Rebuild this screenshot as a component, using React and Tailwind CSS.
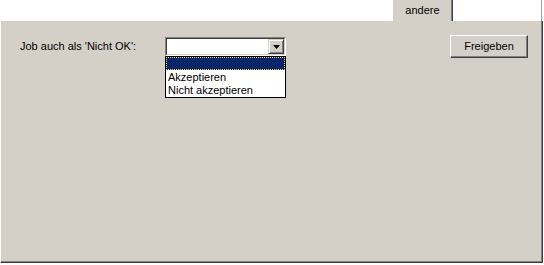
import React from "react";

export default function App() {
  return (
    <div className="w-[544px] h-[265px] bg-white relative overflow-hidden text-[11px] leading-[13px] text-black" style={{ fontFamily: '"Liberation Sans", Arial, sans-serif' }}>
      {/* top tab strip */}
      <div className="flex h-[21px]">
        <div className="w-[392px]" />
        <div className="w-[61px] bg-[#d4d0c8] border-l border-white border-r border-r-[#404040] shadow-[inset_-1px_0_0_#808080] flex items-start justify-center pt-[4px]">
          <span>andere</span>
        </div>
        <div className="w-[88px]" />
        <div className="w-[1px] bg-[#a0a0a0]" />
      </div>
      {/* panel */}
      <div className="w-[543px] h-[242px] bg-[#d4d0c8] border-l border-l-white border-r border-r-[#404040] border-b border-b-[#404040] shadow-[inset_-1px_-1px_0_#808080] pt-[14px] pl-[19px]">
        <div className="flex items-start">
          <div className="w-[145px] mt-[5px]">Job auch als 'Nicht OK':</div>
          <div className="relative mt-[2px]">
            <div className="w-[121px] h-[19px] border border-t-[#808080] border-l-[#808080] border-r-white border-b-white">
              <div className="w-full h-full bg-white border border-t-[#404040] border-l-[#404040] border-r-[#d4d0c8] border-b-[#d4d0c8] flex justify-end">
                <div className="w-[16px] h-full bg-[#d4d0c8] border border-t-[#d4d0c8] border-l-[#d4d0c8] border-r-[#404040] border-b-[#404040] shadow-[inset_1px_1px_0_#ffffff,inset_-1px_-1px_0_#808080] flex items-center justify-center">
                  <svg width="7" height="4" viewBox="0 0 7 4">
                    <path d="M0 0h7L3.5 4z" fill="#000" />
                  </svg>
                </div>
              </div>
            </div>
            {/* dropdown list overlay */}
            <div className="absolute left-0 top-[19px] w-[121px] bg-white border border-black">
              <div className="h-[13px] bg-[#0a246a] border border-dotted border-[#ffd34d]" />
              <div className="h-[14px] pl-[2px] leading-[15px]">Akzeptieren</div>
              <div className="h-[13px] pl-[2px] leading-[13px]">Nicht akzeptieren</div>
            </div>
          </div>
          <div className="ml-auto mr-[14px] w-[78px] h-[23px] border border-t-white border-l-white border-r-[#404040] border-b-[#404040] shadow-[inset_-1px_-1px_0_#808080] flex items-center justify-center">
            Freigeben
          </div>
        </div>
      </div>
    </div>
  );
}
